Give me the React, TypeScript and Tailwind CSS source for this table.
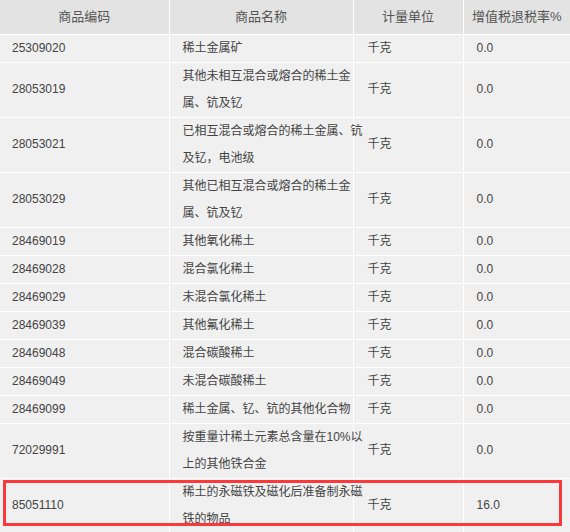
const rows: { code: string; name: string[]; unit: string; rate: string }[] = [
  { code: "25309020", name: ["稀土金属矿"], unit: "千克", rate: "0.0" },
  { code: "28053019", name: ["其他未相互混合或熔合的稀土金", "属、钪及钇"], unit: "千克", rate: "0.0" },
  { code: "28053021", name: ["已相互混合或熔合的稀土金属、钪", "及钇，电池级"], unit: "千克", rate: "0.0" },
  { code: "28053029", name: ["其他已相互混合或熔合的稀土金", "属、钪及钇"], unit: "千克", rate: "0.0" },
  { code: "28469019", name: ["其他氧化稀土"], unit: "千克", rate: "0.0" },
  { code: "28469028", name: ["混合氯化稀土"], unit: "千克", rate: "0.0" },
  { code: "28469029", name: ["未混合氯化稀土"], unit: "千克", rate: "0.0" },
  { code: "28469039", name: ["其他氟化稀土"], unit: "千克", rate: "0.0" },
  { code: "28469048", name: ["混合碳酸稀土"], unit: "千克", rate: "0.0" },
  { code: "28469049", name: ["未混合碳酸稀土"], unit: "千克", rate: "0.0" },
  { code: "28469099", name: ["稀土金属、钇、钪的其他化合物"], unit: "千克", rate: "0.0" },
  { code: "72029991", name: ["按重量计稀土元素总含量在10%以", "上的其他铁合金"], unit: "千克", rate: "0.0" },
  { code: "85051110", name: ["稀土的永磁铁及磁化后准备制永磁", "铁的物品"], unit: "千克", rate: "16.0" },
];

export default function App() {
  return (
    <div
      className="relative w-[570px] h-[532px] overflow-hidden bg-white text-[#444]"
      style={{ fontFamily: '"Liberation Sans", "Noto Sans CJK SC", sans-serif' }}
    >
      <table className="w-[570px] table-fixed border-collapse text-[12px] leading-[27px]">
        <colgroup>
          <col className="w-[169px]" />
          <col className="w-[184px]" />
          <col className="w-[110px]" />
          <col className="w-[107px]" />
        </colgroup>
        <thead>
          <tr className="bg-[#e3e3e3] h-[34px] text-[13px] text-[#555]">
            <th className="font-normal border border-white border-t-0 border-l-0 text-center">商品编码</th>
            <th className="font-normal border border-white border-t-0 text-center">商品名称</th>
            <th className="font-normal border border-white border-t-0 text-center">计量单位</th>
            <th className="font-normal border border-white border-t-0 border-r-0 text-center">增值税退税率%</th>
          </tr>
        </thead>
        <tbody>
          {rows.map((r) => (
            <tr key={r.code} className="bg-[#f0f0f0]">
              <td className="border border-white border-l-0 pl-[12px] align-middle">{r.code}</td>
              <td className="border border-white pl-[13px] align-middle whitespace-nowrap">
                {r.name.map((line, i) => (
                  <div key={i}>{line}</div>
                ))}
              </td>
              <td className="border border-white pl-[14px] align-middle">{r.unit}</td>
              <td className="border border-white border-r-0 pl-[13px] align-middle">{r.rate}</td>
            </tr>
          ))}
        </tbody>
      </table>
      {/* highlight box over the last row */}
      <div className="absolute left-[3px] top-[480px] w-[559px] h-[46px] border-[3px] border-[#fa3a3a]" />
    </div>
  );
}
